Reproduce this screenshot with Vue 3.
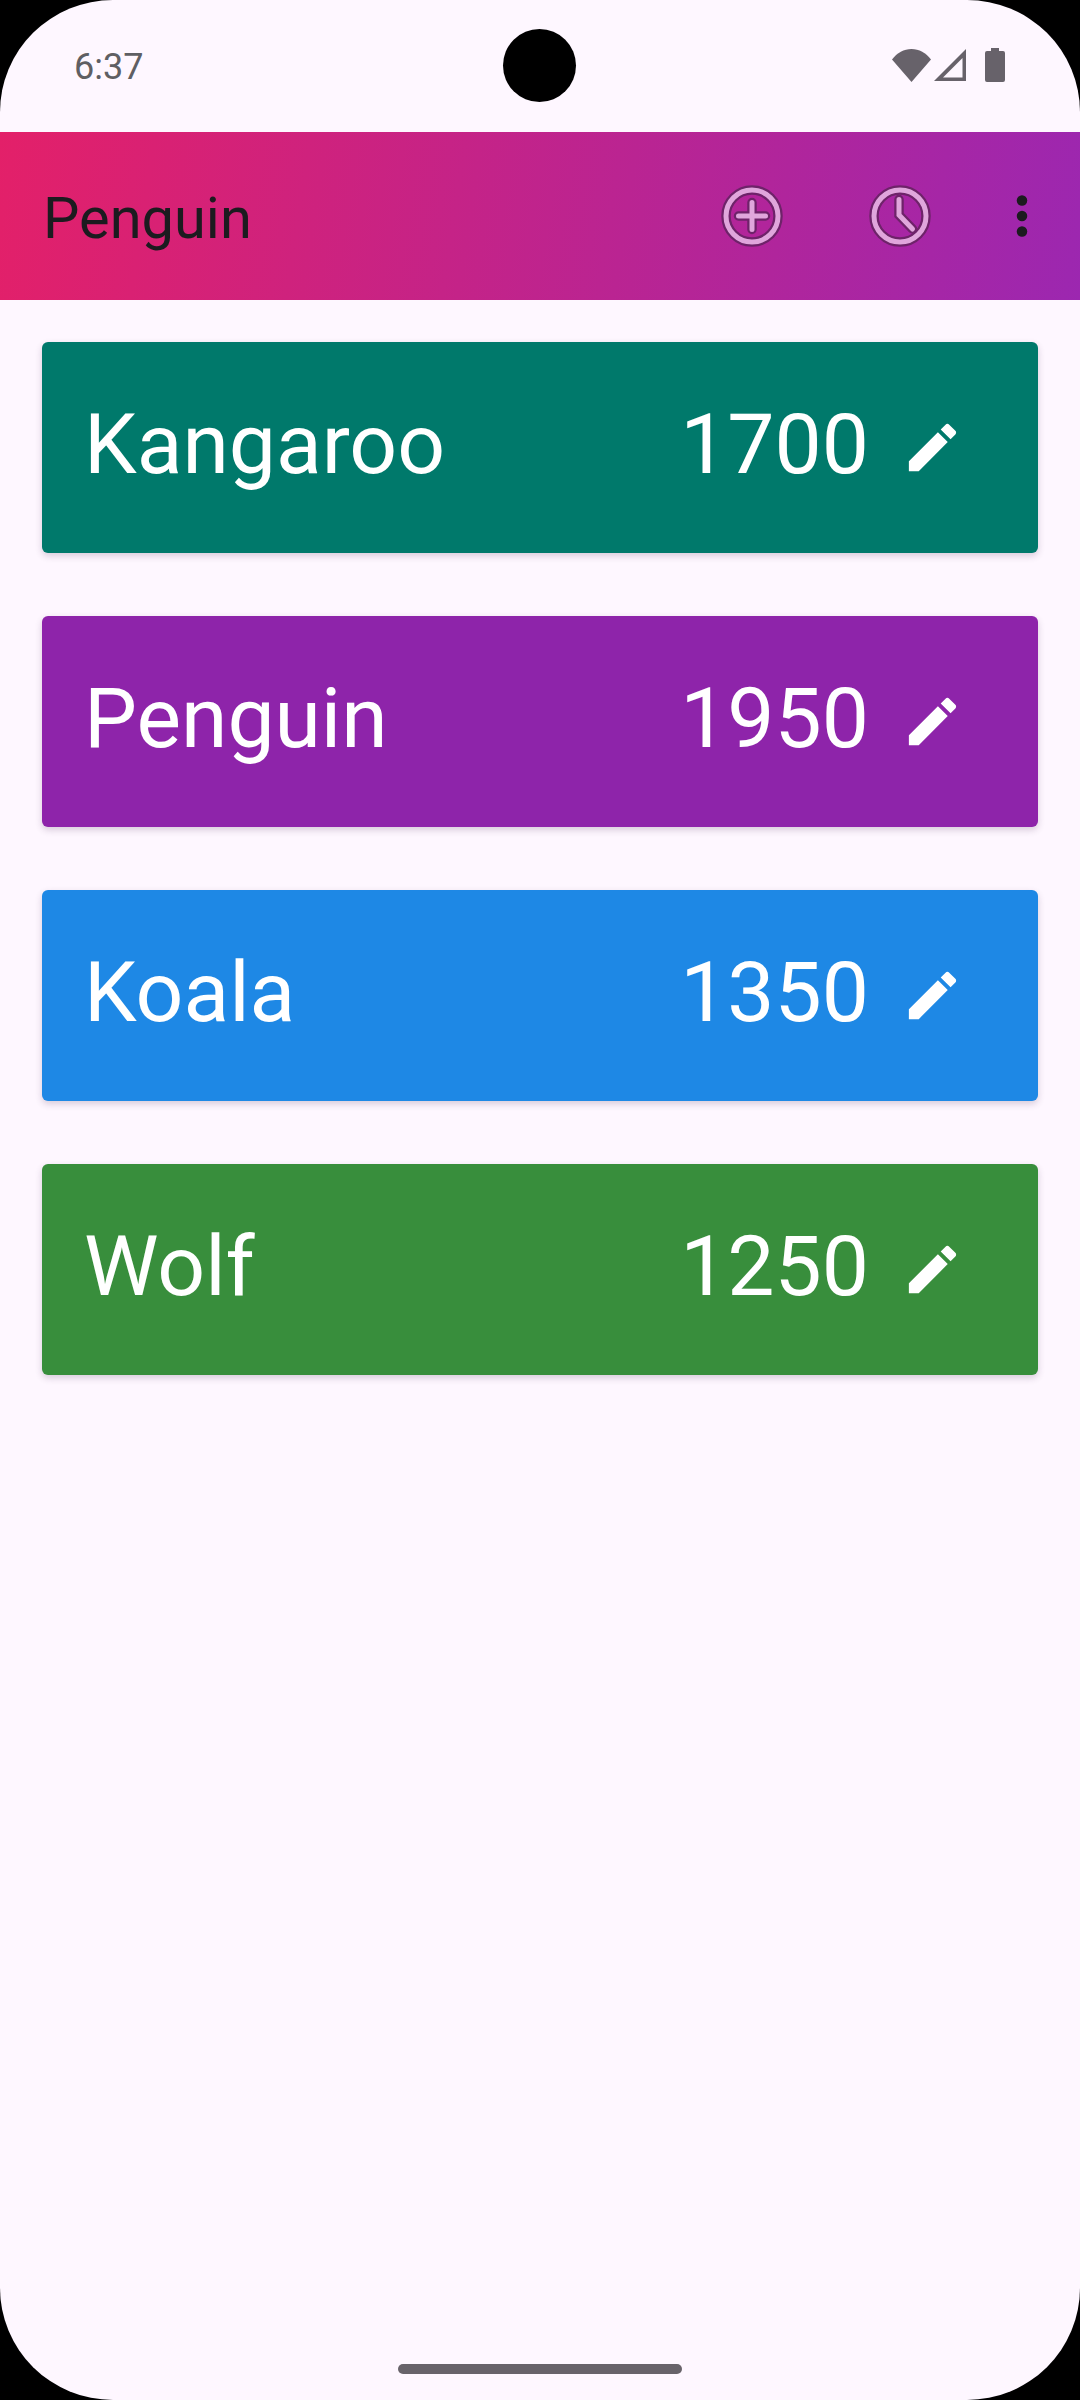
<template>
  <div class="screen">
    <div class="status-bar">
      <span class="time">6:37</span>
      <div class="status-icons">
        <svg class="wifi" width="39" height="33" viewBox="0 0 39 33">
          <path d="M0 10.5C5 4 12 0 19.5 0S34 4 39 10.500L19.500 33z" />
        </svg>
        <svg class="signal" width="32" height="32" viewBox="0 0 32 32">
          <path d="M0 32 32 0v32zM9 28.500h19.500V9z" fill-rule="evenodd" />
        </svg>
        <svg class="battery" width="20" height="34" viewBox="0 0 20 34">
          <path d="M6 0h8v3h4a2 2 0 0 1 2 2v27a2 2 0 0 1-2 2H2a2 2 0 0 1-2-2V5a2 2 0 0 1 2-2h4z" />
        </svg>
      </div>
    </div>
    <div class="camera"></div>

    <header class="app-bar">
      <span class="title">Penguin</span>
      <div class="actions">
        <svg class="action" width="64" height="64" viewBox="0 0 64 64">
          <circle class="edge" cx="32" cy="32" r="26" />
          <path class="edge" d="M32 18.500v27M18.500 32h27" />
          <circle class="line" cx="32" cy="32" r="26" />
          <path class="line" d="M32 18.500v27M18.500 32h27" />
        </svg>
        <svg class="action" width="64" height="64" viewBox="0 0 64 64">
          <circle class="edge" cx="32" cy="32" r="26" />
          <path class="edge" d="M31 15.500V31l13.500 14" />
          <circle class="line" cx="32" cy="32" r="26" />
          <path class="line" d="M31 15.500V31l13.500 14" />
        </svg>
        <svg class="more" width="12" height="42" viewBox="0 0 12 42">
          <circle cx="6" cy="5.500" r="5.250" />
          <circle cx="6" cy="21" r="5.250" />
          <circle cx="6" cy="36.500" r="5.250" />
        </svg>
      </div>
    </header>

    <main class="list">
      <div
        v-for="animal in animals"
        :key="animal.name"
        class="card"
        :class="animal.tone"
      >
        <span class="name">{{ animal.name }}</span>
        <span class="score">{{ animal.score }}</span>
        <svg class="edit" width="63" height="63" viewBox="0 0 24 24">
          <path d="M3 17.250V21h3.750L17.810 9.940l-3.750-3.750L3 17.250zM20.710 7.040c.39-.39.39-1.020 0-1.410l-2.340-2.340c-.39-.39-1.020-.39-1.410 0l-1.830 1.830 3.750 3.750 1.830-1.830z" />
        </svg>
      </div>
    </main>

    <div class="home-bar"></div>
  </div>
</template>

<script setup>
const animals = [
  { name: "Kangaroo", score: 1700, tone: "teal" },
  { name: "Penguin", score: 1950, tone: "purple" },
  { name: "Koala", score: 1350, tone: "blue" },
  { name: "Wolf", score: 1250, tone: "green" }
];
</script>

<style>
body {
  background: #000;
}
</style>

<style scoped>
.screen {
  position: relative;
  display: flex;
  flex-direction: column;
  width: 1080px;
  height: 2400px;
  overflow: hidden;
  background: #fef7ff;
  border-radius: 113px / 112px;
  font-family: Roboto, sans-serif;
}

/* status bar */
.status-bar {
  display: flex;
  align-items: center;
  justify-content: space-between;
  height: 132px;
  padding: 0 75px 0 74px;
  box-sizing: border-box;
}

.time {
  font-size: 36px;
  color: #5f5f63;
  margin-top: 2px;
}

.status-icons {
  display: flex;
  align-items: center;
  gap: 3px;
  margin-bottom: 2px;
  fill: #67626a;
}

.battery {
  margin-left: 16px;
}

.camera {
  position: absolute;
  top: 29px;
  left: 503px;
  width: 73px;
  height: 73px;
  border-radius: 50%;
  background: #000;
}

/* app bar */
.app-bar {
  display: flex;
  align-items: center;
  justify-content: space-between;
  height: 168px;
  padding: 0 52px 0 43px;
  background: linear-gradient(98.84deg, #e32069, #9c27b0);
}

.title {
  font-size: 57.750px;
  color: #1c1b1f;
  margin-top: 4px;
}

.actions {
  display: flex;
  align-items: center;
}

.action {
  margin-right: 84px;
  fill: none;
  stroke-linecap: round;
}

.edge {
  stroke: #6e2369;
  stroke-width: 9.500px;
}

.line {
  stroke: #e0a6dc;
  stroke-width: 5px;
}

.more {
  fill: #1c1b1f;
}

/* cards */
.list {
  display: flex;
  flex-direction: column;
  gap: 63px;
  padding: 42px 42px 0;
}

.card {
  display: flex;
  align-items: center;
  height: 211px;
  padding: 0 74px 0 42px;
  border-radius: 6px;
  color: #fff;
  font-size: 84px;
  box-shadow: 0 3px 7px rgba(60, 30, 70, 0.2);
}

.teal { background: #00796b; }
.purple { background: #8e24aa; }
.blue { background: #1e88e5; }
.green { background: #388e3c; }

.name {
  flex: 1;
  margin-bottom: 6px;
}

.score {
  margin: 0 32px 6px 0;
}

.edit {
  fill: #fff;
}

.home-bar {
  position: absolute;
  left: 398px;
  bottom: 26px;
  width: 284px;
  height: 10px;
  border-radius: 5px;
  background: #68636a;
}
</style>
